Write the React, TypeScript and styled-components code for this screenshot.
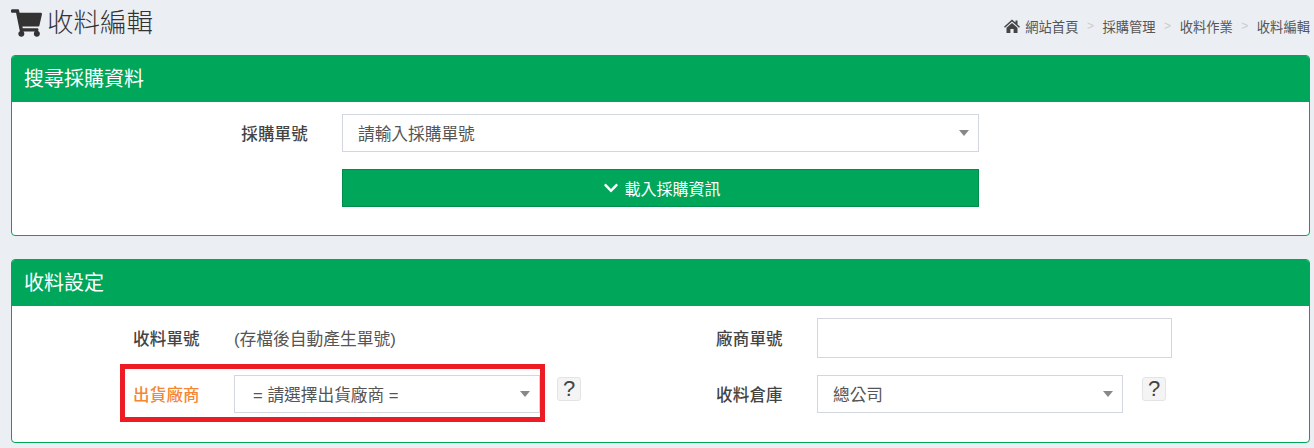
import React from 'react'
import styled, {createGlobalStyle} from 'styled-components'
import {FaShoppingCart, FaChevronDown} from 'react-icons/fa'

const fontStack = `"Liberation Sans", "Noto Sans CJK TC", sans-serif`

const GlobalStyle = createGlobalStyle`
    html, body {
        margin: 0;
        padding: 0;
        background: #ebeef3;
        font-family: ${fontStack};
        color: #333;
    }
    * { box-sizing: border-box; }
`

const Page = styled.div`
    width: 1314px;
    height: 448px;
    overflow: hidden;
    padding: 0 4px 0 11px;
`

const TopBar = styled.header`
    height: 55px;
    display: flex;
    justify-content: space-between;
`

const PageTitle = styled.h1`
    margin: 6px 0 0;
    height: 34px;
    display: flex;
    align-items: center;
    gap: 5px;
    font-size: 26.5px;
    line-height: 34px;
    font-weight: 300;
    color: #333;
    svg { width: 31px; height: 28px; color: #333; }
`

const Breadcrumb = styled.nav`
    margin: 17px 0 0;
    height: 18px;
    display: flex;
    align-items: center;
    font-size: 13.3px;
    color: #666;
`

const HomeIcon = styled.svg`
    width: 16px;
    height: 14px;
    margin-right: 5px;
    fill: #444;
`

const Crumb = styled.span`
    color: #555;
`

const CrumbSep = styled.span`
    width: 24px;
    text-align: center;
    color: #ccc;
    font-size: 12px;
`

const Panel = styled.section<{$height: number}>`
    height: ${p => p.$height}px;
    margin-bottom: 23px;
    background: #fff;
    border: 1px solid #00a65a;
    border-radius: 4px;
    overflow: hidden;
`

const PanelHeading = styled.h2`
    margin: 0;
    height: 46px;
    padding: 0 12px;
    background: #00a65a;
    color: #fff;
    font-size: 20px;
    font-weight: 400;
    line-height: 46px;
`

const SearchBody = styled.div`
    padding: 12px 0 0;
    display: grid;
    grid-template-columns: 296px 637px;
    grid-auto-rows: 38px;
    column-gap: 34px;
    row-gap: 17px;
    align-items: center;
`

const Label = styled.label<{$required?: boolean}>`
    font-size: 16.5px;
    font-weight: 500;
    letter-spacing: 0.2px;
    color: ${p => (p.$required ? '#f58634' : '#444')};
    white-space: nowrap;
`

const SearchLabel = styled(Label)`
    text-align: right;
`

const SelectBox = styled.div<{$indent?: number}>`
    height: 38px;
    padding: 0 15px 0 ${p => p.$indent ?? 15}px;
    border: 1px solid #d2d6de;
    background: #fff;
    display: flex;
    align-items: center;
    justify-content: space-between;
    font-size: 16.7px;
    color: #555;
    white-space: nowrap;
    &::after {
        content: '';
        border-left: 5px solid transparent;
        border-right: 5px solid transparent;
        border-top: 6px solid #888;
        margin-right: -6px;
    }
`

const SubmitButton = styled.button`
    grid-column: 2;
    height: 38px;
    padding: 0 0 0 3px;
    border: 1px solid #008d4c;
    background: #00a65a;
    color: #fff;
    font-family: inherit;
    font-size: 16px;
    display: flex;
    align-items: center;
    justify-content: center;
    gap: 5px;
    svg { width: 16px; height: 16px; }
`

const SettingsBody = styled.div`
    padding: 12px 0 0 122px;
    display: grid;
    grid-template-columns: 100px 306px 24px 153px 100px 306px 24px;
    grid-template-rows: 40px 38px;
    row-gap: 17px;
    align-items: center;
    position: relative;
`

const StaticValue = styled.div`
    grid-column: 2 / span 2;
    font-size: 16.75px;
    color: #555;
    white-space: nowrap;
`

const SettingLabel = styled(Label)<{$wide?: boolean}>`
    grid-column: ${p => (p.$wide ? 5 : 1)};
    margin-left: -1px;
`

const TextInput = styled.input`
    grid-column: 6 / span 3;
    width: 355px;
    height: 40px;
    border: 1px solid #d2d6de;
    background: #fff;
    outline: none;
`

const HelpButton = styled.button<{$offset: number}>`
    width: 24px;
    height: 24px;
    margin: -10px 0 0 ${p => p.$offset}px;
    padding: 0;
    border: 1px solid #e4e4e4;
    border-radius: 3px;
    background: #f4f4f4;
    color: #444;
    font-family: inherit;
    font-size: 22px;
    font-weight: 400;
    line-height: 20px;
`

const Highlight = styled.div`
    position: absolute;
    left: 108px;
    top: 58px;
    width: 425px;
    height: 58px;
    border: 5px solid #ed1c24;
    pointer-events: none;
`

export default function App() {
    return (
        <>
            <GlobalStyle />
            <Page>
                <TopBar>
                    <PageTitle><FaShoppingCart />收料編輯</PageTitle>
                    <Breadcrumb>
                        <HomeIcon viewBox="0 0 16 14">
                            <path d="M8 0.5 L11.5 3.6 V1.5 H13.5 V5.4 L16 7.7 L15 8.7 L8 2.6 L1 8.7 L0 7.7 Z" />
                            <path d="M8 4 L13.5 8.8 V14 H9.6 V10 H6.4 V14 H2.5 V8.8 Z" />
                        </HomeIcon>
                        <Crumb>網站首頁</Crumb>
                        <CrumbSep>&gt;</CrumbSep>
                        <Crumb>採購管理</Crumb>
                        <CrumbSep>&gt;</CrumbSep>
                        <Crumb>收料作業</Crumb>
                        <CrumbSep>&gt;</CrumbSep>
                        <Crumb>收料編輯</Crumb>
                    </Breadcrumb>
                </TopBar>
                <Panel $height={181}>
                    <PanelHeading>搜尋採購資料</PanelHeading>
                    <SearchBody>
                        <SearchLabel>採購單號</SearchLabel>
                        <SelectBox>請輸入採購單號</SelectBox>
                        <SubmitButton><FaChevronDown />載入採購資訊</SubmitButton>
                    </SearchBody>
                </Panel>
                <Panel $height={184}>
                    <PanelHeading>收料設定</PanelHeading>
                    <SettingsBody>
                        <SettingLabel>收料單號</SettingLabel>
                        <StaticValue>(存檔後自動產生單號)</StaticValue>
                        <SettingLabel $wide>廠商單號</SettingLabel>
                        <TextInput />
                        <SettingLabel $required>出貨廠商</SettingLabel>
                        <SelectBox $indent={18}>= 請選擇出貨廠商 =</SelectBox>
                        <HelpButton $offset={17}>?</HelpButton>
                        <SettingLabel $wide>收料倉庫</SettingLabel>
                        <SelectBox>總公司</SelectBox>
                        <HelpButton $offset={19}>?</HelpButton>
                        <Highlight />
                    </SettingsBody>
                </Panel>
            </Page>
        </>
    )
}
